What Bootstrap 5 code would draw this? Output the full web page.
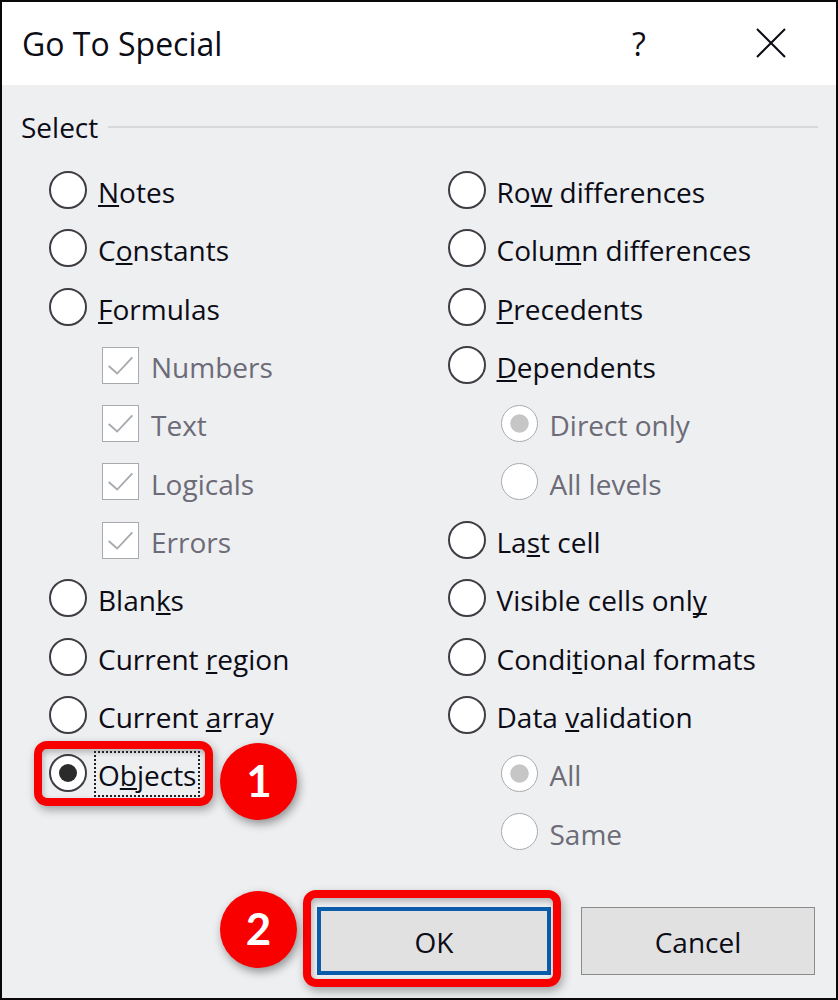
<!DOCTYPE html>
<html lang="en">
<head>
<meta charset="utf-8">
<meta name="viewport" content="width=device-width, initial-scale=1">
<title>Go To Special</title>
<link href="https://cdn.jsdelivr.net/npm/bootstrap@5.3.0/dist/css/bootstrap.min.css" rel="stylesheet">
<style>
  body { font-family: "Open Sans", "Noto Sans", sans-serif; font-size: 28px; line-height: 36px; color: #0c0c16; }
  .dialog { min-height: 100vh; background: #eeeff1; border: 2px solid #0a0808; }
  .title-bar { background: #fff; height: 83px; padding: 0 33px 0 20px; }
  .title-bar h1 { font-size: 32px; line-height: 40px; font-weight: 400; }
  .title-btn { width: 64px; height: 64px; color: #0c0c16; font-size: 32px; line-height: 40px; }
  .help-btn { margin-right: 68px; }
  .group-body { padding: 24px 18px 0 19px; }
  .group-title { font-size: 28px; line-height: 36px; gap: 10px; }
  .group-title::after { content: ""; flex: 1; height: 2px; background: #d6d8da; }
  .options { padding-left: 28px; display: grid; grid-template-rows: repeat(12, minmax(48px, 1fr)); }
  .option { position: relative; display: flex; align-items: center; justify-self: start; gap: 11px; }
  .option.sub { margin-left: 53px; color: #6c6b77; gap: 12px; }
  .option label { padding-top: 4px; white-space: nowrap; }
  u { text-decoration-thickness: 2px; text-underline-offset: 2px; text-decoration-skip-ink: none; }
  .option .form-check-input { width: 38px; height: 38px; margin: 0; flex: none; background-color: #fff; border: 2px solid #403c44; box-shadow: none; opacity: 1; }
  .option .form-check-input[type=checkbox] { border-radius: 0; }
  .option .form-check-input:disabled { width: 37px; height: 37px; border: 1px solid #a9aaae; }
  .option .form-check-input:disabled ~ label { opacity: 1; }
  .option .form-check-input[type=radio]:checked { background-size: 100% 100%; background-image: url("data:image/svg+xml,%3csvg xmlns='http://www.w3.org/2000/svg' viewBox='0 0 34 34'%3e%3ccircle cx='17' cy='17' r='9' fill='%232b2b2b'/%3e%3c/svg%3e"); }
  .option .form-check-input[type=radio]:checked:disabled { background-image: url("data:image/svg+xml,%3csvg xmlns='http://www.w3.org/2000/svg' viewBox='0 0 34 34'%3e%3ccircle cx='17' cy='17' r='9' fill='%23c6c6c6'/%3e%3c/svg%3e"); }
  .option .form-check-input[type=checkbox]:checked { background-size: 100% 100%; background-image: url("data:image/svg+xml,%3csvg xmlns='http://www.w3.org/2000/svg' viewBox='0 0 37 37'%3e%3cpath d='M6 19l9 8L31 10' fill='none' stroke='%23a9aaae' stroke-width='2'/%3e%3c/svg%3e"); }
  /* Red callouts that mark the steps */
  .marked::before { content: ""; position: absolute; border: 8px solid #f80000; border-radius: 13px; box-shadow: 2px 4px 10px #0005, inset 1px 3px 6px #0004; pointer-events: none; }
  .option.marked::before { inset: -3px -17px -3px -15px; }
  .focused { position: relative; }
  .focused::after { content: ""; position: absolute; inset: -2px -4px -4px -4px; border: 2px dotted #222; }
  .step { position: absolute; top: 50%; width: 77px; height: 77px; border-radius: 50%; background: #f80000; color: #fff; font: 700 44px/75px Lato, sans-serif; text-align: center; box-shadow: 2px 4px 10px #0006; }
  .option .step { left: calc(100% + 24px); margin-top: -30px; }
  .ok-wrap .step { right: calc(100% + 20px); margin-top: -50px; }
  .actions { gap: 30px; padding: 46px 21px 23px; }
  .ok-wrap { position: relative; }
  .ok-wrap.marked::before { inset: -17px -10px -12px -14px; }
  .action-btn { width: 234px; height: 68px; padding: 2px 0 0; border: 1px solid #8b8b8c; border-radius: 0; background: #e1e1e2; color: #0c0c16; font-size: 28px; line-height: 36px; }
  .action-btn.default { border: 4px solid #0b5cab; }
</style>
</head>
<body>
<main class="dialog d-flex flex-column">
  <header class="title-bar d-flex align-items-center">
    <h1 class="m-0 me-auto">Go To Special</h1>
    <button type="button" class="title-btn help-btn btn p-0 border-0" aria-label="Help">?</button>
    <button type="button" class="title-btn btn p-0 border-0 d-flex align-items-center justify-content-center" aria-label="Close">
      <svg width="32" height="32" viewBox="0 0 32 32" fill="none" stroke="currentColor" stroke-width="2" aria-hidden="true"><path d="M2 1l28 28M30 1L2 29"/></svg>
    </button>
  </header>
  <form class="d-flex flex-column flex-grow-1">
    <div class="group-body d-flex flex-column flex-grow-1" role="group" aria-labelledby="select-title">
      <div class="group-title d-flex align-items-center" id="select-title">Select</div>
      <div class="row g-0 flex-grow-1 pt-3">
        <div class="col-6 options">
          <div class="option"><input class="form-check-input" type="radio" name="target" id="notes"><label for="notes"><u>N</u>otes</label></div>
          <div class="option"><input class="form-check-input" type="radio" name="target" id="constants"><label for="constants">C<u>o</u>nstants</label></div>
          <div class="option"><input class="form-check-input" type="radio" name="target" id="formulas"><label for="formulas"><u>F</u>ormulas</label></div>
          <div class="option sub"><input class="form-check-input" type="checkbox" id="numbers" checked disabled><label for="numbers">Numbers</label></div>
          <div class="option sub"><input class="form-check-input" type="checkbox" id="text" checked disabled><label for="text">Text</label></div>
          <div class="option sub"><input class="form-check-input" type="checkbox" id="logicals" checked disabled><label for="logicals">Logicals</label></div>
          <div class="option sub"><input class="form-check-input" type="checkbox" id="errors" checked disabled><label for="errors">Errors</label></div>
          <div class="option"><input class="form-check-input" type="radio" name="target" id="blanks"><label for="blanks">Blan<u>k</u>s</label></div>
          <div class="option"><input class="form-check-input" type="radio" name="target" id="region"><label for="region">Current <u>r</u>egion</label></div>
          <div class="option"><input class="form-check-input" type="radio" name="target" id="array"><label for="array">Current <u>a</u>rray</label></div>
          <div class="option marked"><input class="form-check-input" type="radio" name="target" id="objects" checked><label class="focused" for="objects">O<u>b</u>jects</label><span class="step">1</span></div>
        </div>
        <div class="col-6 options">
          <div class="option"><input class="form-check-input" type="radio" name="target" id="rowdiff"><label for="rowdiff">Ro<u>w</u> differences</label></div>
          <div class="option"><input class="form-check-input" type="radio" name="target" id="coldiff"><label for="coldiff">Colu<u>m</u>n differences</label></div>
          <div class="option"><input class="form-check-input" type="radio" name="target" id="precedents"><label for="precedents"><u>P</u>recedents</label></div>
          <div class="option"><input class="form-check-input" type="radio" name="target" id="dependents"><label for="dependents"><u>D</u>ependents</label></div>
          <div class="option sub"><input class="form-check-input" type="radio" name="depth" id="direct" checked disabled><label for="direct">Direct only</label></div>
          <div class="option sub"><input class="form-check-input" type="radio" name="depth" id="levels" disabled><label for="levels">All levels</label></div>
          <div class="option"><input class="form-check-input" type="radio" name="target" id="last"><label for="last">La<u>s</u>t cell</label></div>
          <div class="option"><input class="form-check-input" type="radio" name="target" id="visible"><label for="visible">Visible cells onl<u>y</u></label></div>
          <div class="option"><input class="form-check-input" type="radio" name="target" id="formats"><label for="formats">Condi<u>t</u>ional formats</label></div>
          <div class="option"><input class="form-check-input" type="radio" name="target" id="validation"><label for="validation">Data <u>v</u>alidation</label></div>
          <div class="option sub"><input class="form-check-input" type="radio" name="scope" id="all" checked disabled><label for="all">All</label></div>
          <div class="option sub"><input class="form-check-input" type="radio" name="scope" id="same" disabled><label for="same">Same</label></div>
        </div>
      </div>
    </div>
    <div class="actions d-flex justify-content-end">
      <div class="ok-wrap marked"><span class="step">2</span><button type="submit" class="btn action-btn default">OK</button></div>
      <button type="button" class="btn action-btn">Cancel</button>
    </div>
  </form>
</main>
<script src="https://cdn.jsdelivr.net/npm/bootstrap@5.3.0/dist/js/bootstrap.bundle.min.js"></script>
</body>
</html>
